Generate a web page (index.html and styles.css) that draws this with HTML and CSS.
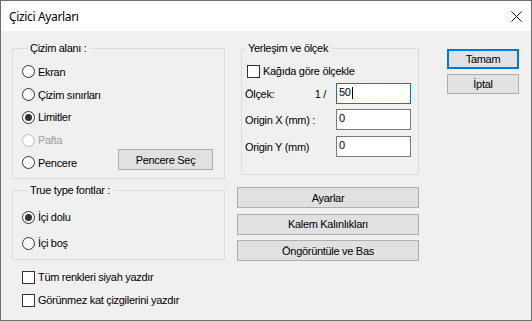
FILE: index.html
```html
<!DOCTYPE html>
<html lang="tr">
<head>
<meta charset="utf-8">
<title>Çizici Ayarları</title>
<link rel="stylesheet" href="styles.css">
</head>
<body>
<div class="window">
  <div class="titlebar">
    <span class="title">Çizici Ayarları</span>
    <svg class="close" width="11" height="11" viewBox="0 0 11 11"><path d="M0.5 0.5L10.5 10.5M10.5 0.5L0.5 10.5" stroke="#111" stroke-width="1" fill="none"/></svg>
  </div>
  <div class="content">
    <div class="col-left">
      <fieldset class="group g1">
        <legend>Çizim alanı :</legend>
        <div class="opt"><span class="radio"></span><span>Ekran</span></div>
        <div class="opt"><span class="radio"></span><span>Çizim sınırları</span></div>
        <div class="opt"><span class="radio on"></span><span>Limitler</span></div>
        <div class="opt off"><span class="radio"></span><span>Pafta</span></div>
        <div class="opt"><span class="radio"></span><span>Pencere</span><button class="btn pick">Pencere Seç</button></div>
      </fieldset>
      <fieldset class="group g3">
        <legend>True type fontlar :</legend>
        <div class="opt tall"><span class="radio on"></span><span>İçi dolu</span></div>
        <div class="opt tall"><span class="radio"></span><span>İçi boş</span></div>
      </fieldset>
      <div class="checks">
        <div class="opt ck"><span class="box"></span><span>Tüm renkleri siyah yazdır</span></div>
        <div class="opt ck"><span class="box"></span><span>Görünmez kat çizgilerini yazdır</span></div>
      </div>
    </div>
    <div class="col-mid">
      <fieldset class="group g2">
        <legend>Yerleşim ve ölçek</legend>
        <div class="opt chk"><span class="box"></span><span>Kağıda göre ölçekle</span></div>
        <div class="field f1"><span class="lbl">Ölçek:</span><span class="ratio">1 /</span><div class="tb focus"><span>50</span><span class="caret"></span></div></div>
        <div class="field f2"><span class="lbl">Origin X (mm) :</span><div class="tb"><span>0</span></div></div>
        <div class="field f3"><span class="lbl">Origin Y (mm)</span><div class="tb"><span>0</span></div></div>
      </fieldset>
      <div class="mid-buttons">
        <button class="btn wide">Ayarlar</button>
        <button class="btn wide">Kalem Kalınlıkları</button>
        <button class="btn wide">Öngörüntüle ve Bas</button>
      </div>
    </div>
    <div class="col-right">
      <button class="btn side default">Tamam</button>
      <button class="btn side">İptal</button>
    </div>
  </div>
</div>
</body>
</html>
```
FILE: styles.css
```css
* { box-sizing: border-box; }
html, body { margin: 0; padding: 0; background: #f0f0f0; }
body {
  width: 532px; height: 321px; overflow: hidden;
  font-family: "Liberation Sans", Arial, sans-serif;
  font-size: 11px; color: #000; letter-spacing: -0.3px;
}
.window {
  width: 532px; height: 321px;
  border: 1px solid #6e6e6e;
  background: #f0f0f0;
  display: flex; flex-direction: column;
}
.titlebar {
  flex: none; height: 30px; background: #fff;
  display: flex; align-items: center; justify-content: space-between;
  padding: 0 9px 0 8px;
}
.title { font-family: "Noto Sans", sans-serif; font-size: 12px; letter-spacing: -0.35px; }
.close { display: block; }
.content { flex: 1; display: flex; padding: 11px 0 0 11px; }
.col-left { width: 213px; display: flex; flex-direction: column; flex: none; }
.col-mid { width: 182px; margin-left: 12px; display: flex; flex-direction: column; flex: none; }
.col-right { width: 72px; margin-left: 28px; padding-top: 7px; display: flex; flex-direction: column; gap: 5px; flex: none; }

.group { margin: 0; border: 1px solid #dcdcdc; padding: 0; min-width: 0; }
.group legend { padding: 0 3px; margin-left: 5px; line-height: 13px; height: 13px; }

.g1 { height: 137px; padding: 5.6px 11px 0 9px; }
.g3 { height: 76px; margin-top: 5px; padding: 7px 0 0 9px; }
.g2 { height: 133px; margin-left: 4px; width: 178px; padding: 6px 7px 0 3px; }
.g2 legend { margin-left: 0; }

.opt { display: flex; align-items: center; height: 22.75px; white-space: nowrap; }
.opt.tall { height: 26px; }
.opt.ck { height: 23px; }
.opt.chk { height: 20px; }
.opt.off { color: #a0a0a0; }
.checks { margin-top: 5.5px; padding-left: 10px; }

.radio {
  width: 13px; height: 13px; border-radius: 50%;
  border: 1px solid #333; background: #fff;
  margin-right: 3px; flex: none;
  display: flex; align-items: center; justify-content: center;
}
.radio.on::after { content: ""; width: 7px; height: 7px; border-radius: 50%; background: #333; }
.off .radio { border-color: #bcbcbc; }
.box { width: 13px; height: 13px; border: 1px solid #333; background: #fff; margin-right: 3px; flex: none; }
.chk .box { margin-left: 2px; }

.btn {
  font-family: inherit; font-size: 11px; color: #000; letter-spacing: inherit;
  background: #e1e1e1; border: 1px solid #adadad;
  padding: 0; margin: 0; display: flex; align-items: center; justify-content: center;
}
.pick { margin-left: auto; width: 95px; height: 21px; align-self: flex-start; margin-top: -2.6px; }
.mid-buttons { margin-top: 12px; display: flex; flex-direction: column; gap: 5.5px; }
.wide { width: 182px; height: 21px; }
.side { width: 72px; height: 20px; }
.default { border: 2px solid #0078d7; }

.field { display: flex; align-items: center; height: 21px; }
.f1 { margin-top: 2px; }
.f2 { margin-top: 5px; }
.f3 { margin-top: 6px; }
.lbl { flex: 1; white-space: nowrap; }
.ratio { margin-right: 10px; }
.tb {
  width: 75px; height: 21px; background: #fff;
  border: 1px solid #7a7a7a; padding: 2px 0 0 2px;
  line-height: 13px; display: flex; align-items: flex-start;
}
.tb.focus { border-color: #0078d7; }
.caret { width: 1px; height: 12px; background: #000; margin-left: 1px; margin-top: 1px; }
```
